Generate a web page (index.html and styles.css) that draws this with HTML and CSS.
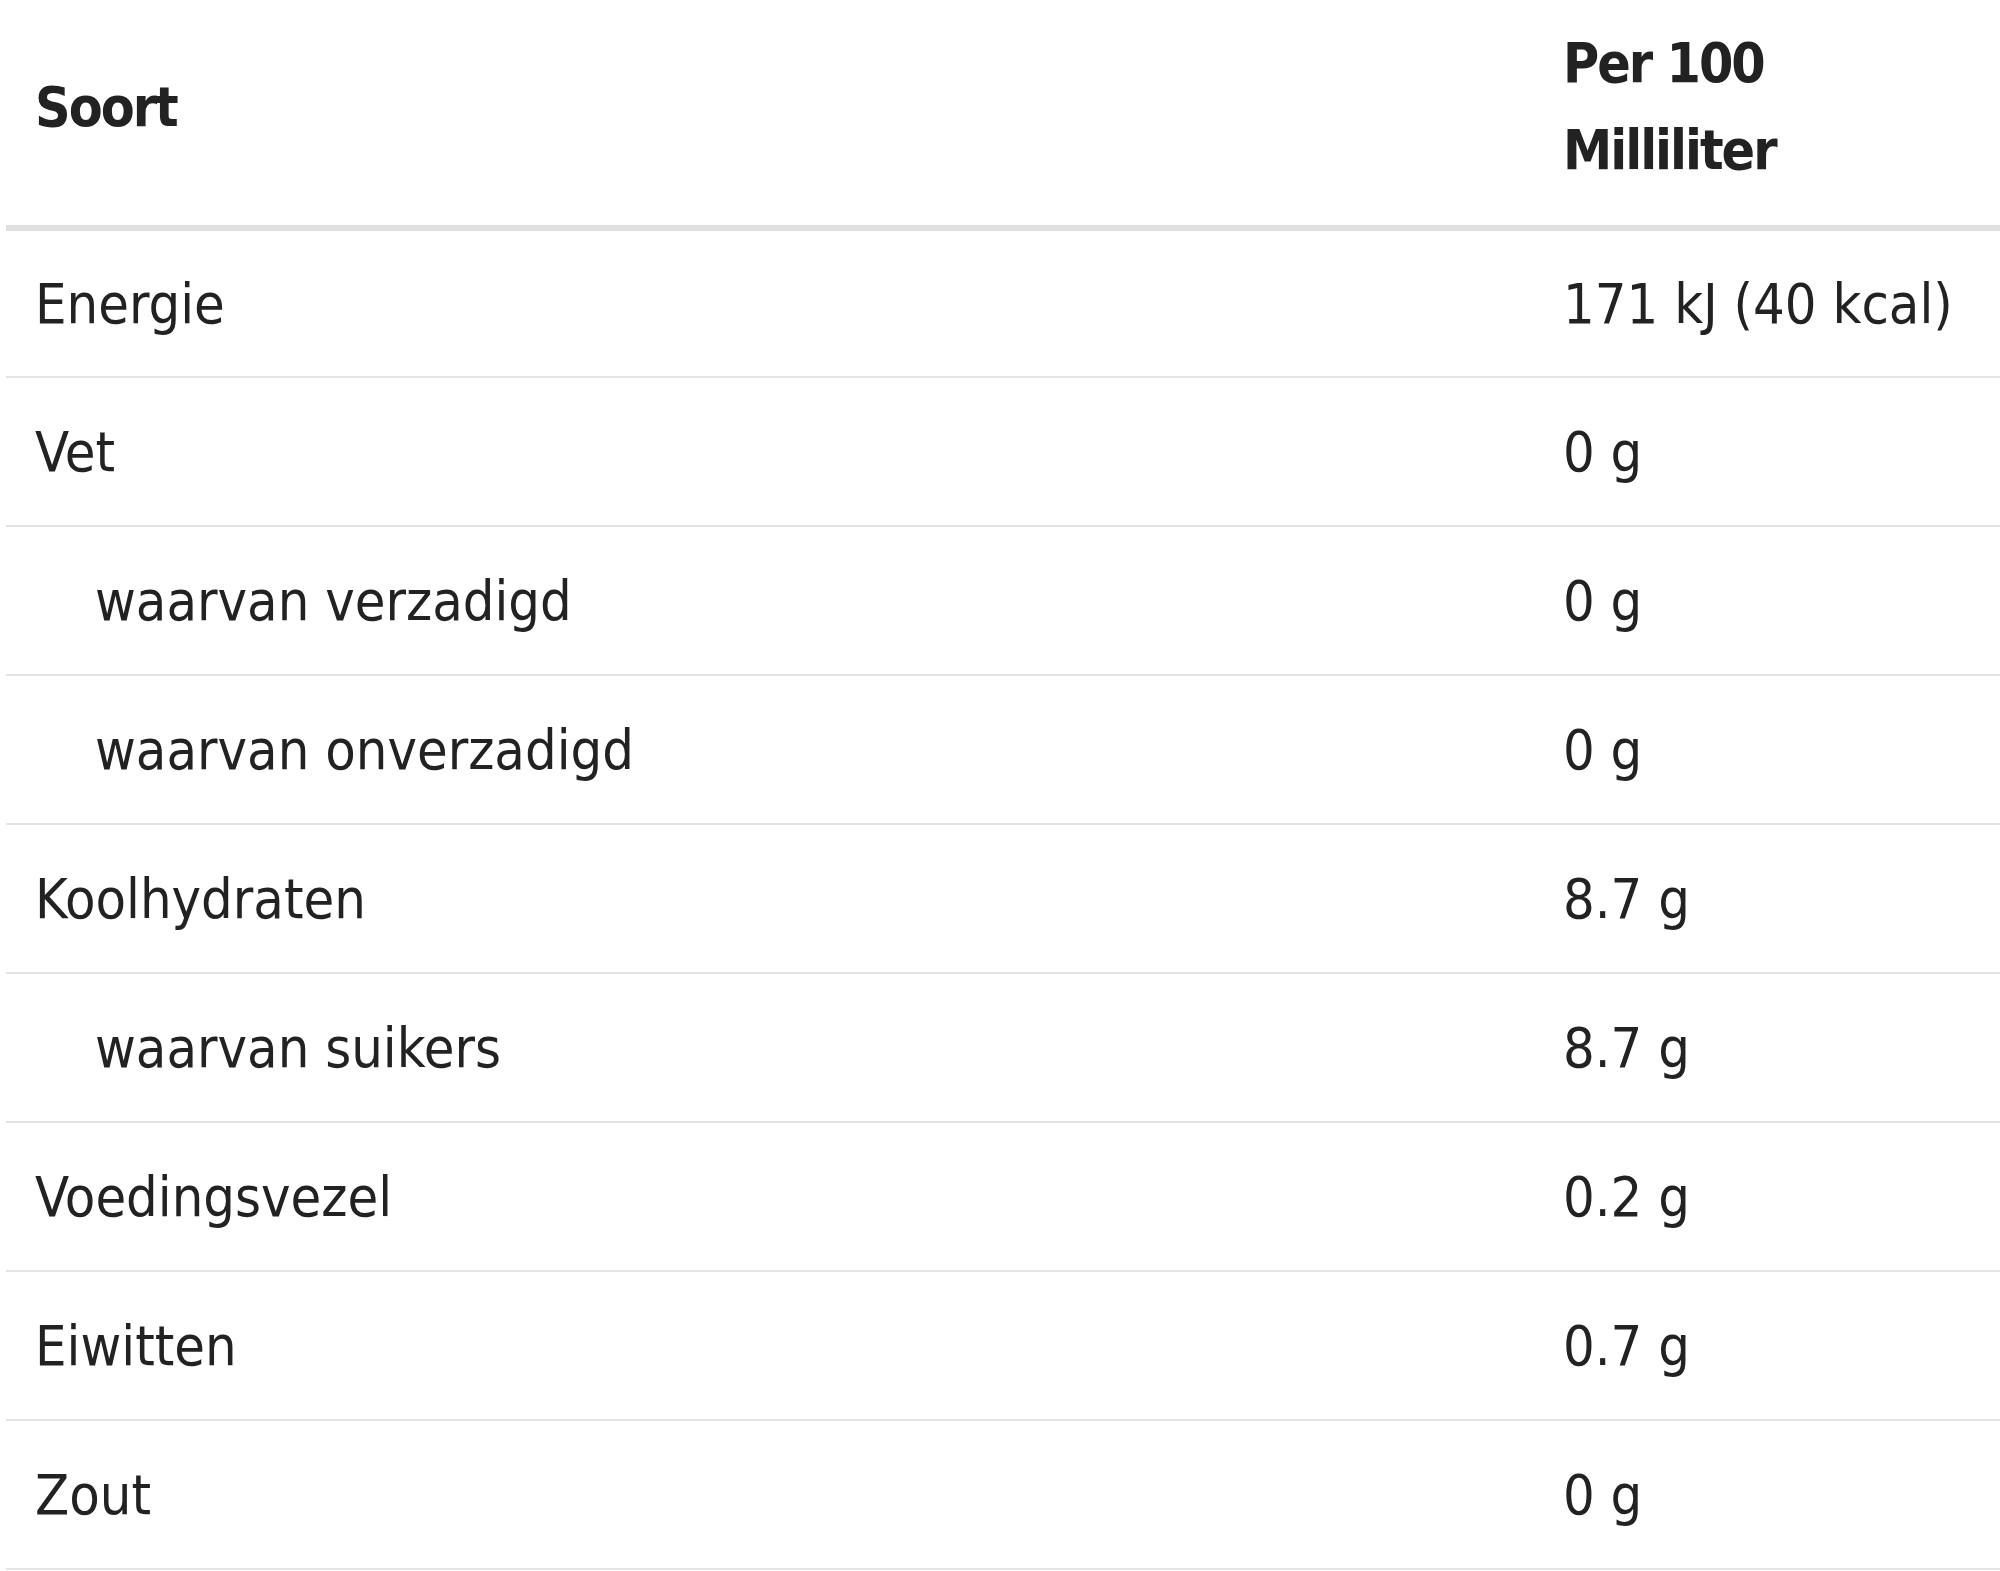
FILE: index.html
```html
<!DOCTYPE html>
<html lang="nl">
<head>
<meta charset="utf-8">
<title>Voedingswaarden</title>
<link rel="stylesheet" href="styles.css">
</head>
<body>
<table class="nutrition">
  <colgroup>
    <col class="col-name">
    <col class="col-value">
  </colgroup>
  <thead>
    <tr>
      <th>Soort</th>
      <th>Per 100<br>Milliliter</th>
    </tr>
  </thead>
  <tbody>
    <tr><td>Energie</td><td>171 kJ (40 kcal)</td></tr>
    <tr><td>Vet</td><td>0 g</td></tr>
    <tr><td class="sub">waarvan verzadigd</td><td>0 g</td></tr>
    <tr><td class="sub">waarvan onverzadigd</td><td>0 g</td></tr>
    <tr><td>Koolhydraten</td><td>8.7 g</td></tr>
    <tr><td class="sub">waarvan suikers</td><td>8.7 g</td></tr>
    <tr><td>Voedingsvezel</td><td>0.2 g</td></tr>
    <tr><td>Eiwitten</td><td>0.7 g</td></tr>
    <tr><td>Zout</td><td>0 g</td></tr>
  </tbody>
</table>
</body>
</html>
```

FILE: styles.css
```css
html, body {
  margin: 0;
  padding: 0;
  background: #ffffff;
}

body {
  font-family: "DejaVu Sans Condensed", "DejaVu Sans", "Liberation Sans Narrow", sans-serif;
  color: #222222;
}

.nutrition {
  margin-left: 6px;
  width: calc(100% - 6px);
  border-collapse: collapse;
  table-layout: fixed;
}

.col-name {
  width: 1528px;
}

.nutrition th {
  font-weight: bold;
  font-size: 55px;
  line-height: 87px;
  letter-spacing: -2px;
  text-align: left;
  vertical-align: middle;
  padding: 20px 0 31px 29px;
  border-bottom: 6px solid #e0e0e0;
}

.nutrition td {
  font-size: 55.5px;
  line-height: 66px;
  text-align: left;
  vertical-align: middle;
  height: 149px;
  padding: 0 0 0 29px;
  box-sizing: border-box;
  border-bottom: 2px solid #e3e3e3;
  white-space: nowrap;
}

.nutrition td.sub {
  padding-left: 89px;
}
```
